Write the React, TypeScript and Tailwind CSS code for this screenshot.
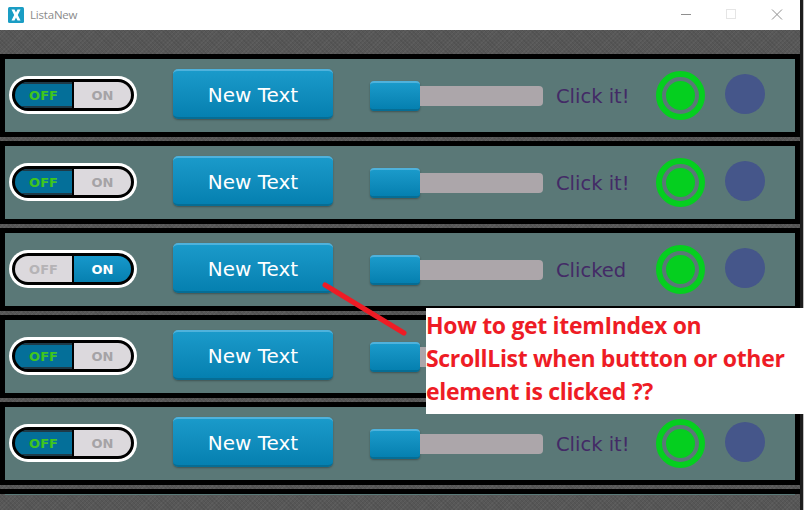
// Imports
import { useState } from 'react'

type RowProps = {
  on?: boolean
  label?: string
}

const texture =
  'bg-[#575757] bg-[repeating-linear-gradient(45deg,rgba(0,0,0,0.07)_0px,rgba(0,0,0,0.07)_1px,transparent_1px,transparent_3px),repeating-linear-gradient(-45deg,rgba(255,255,255,0.04)_0px,rgba(255,255,255,0.04)_1px,transparent_1px,transparent_3px)]'

function Toggle({ on }: { on: boolean }): JSX.Element {
  return (
    <div className="mb-px h-[38px] w-[128px] rounded-full bg-white p-[3px]">
      <div className="flex h-full w-full overflow-hidden rounded-full border-[3px] border-black bg-black">
        <div
          className={
            on
              ? 'flex w-[57px] items-center justify-center bg-[#dcd9dd] pt-px text-[13px] font-bold text-[#b5b3b6]'
              : 'flex w-[57px] items-center justify-center border-t-2 border-b-2 border-[#1f3a47] bg-[#046f99] pt-px text-[13px] font-bold text-[#3fc51e]'
          }
        >
          OFF
        </div>
        <div
          className={
            on
              ? 'ml-[2px] flex w-[57px] items-center justify-center bg-gradient-to-b from-[#1698cb] to-[#0680b0] pt-px text-[13px] font-bold text-white'
              : 'ml-[2px] flex w-[57px] items-center justify-center bg-[#dcd9dd] pt-px text-[13px] font-bold text-[#a5a3a6]'
          }
        >
          ON
        </div>
      </div>
    </div>
  )
}

function Row({ on = false, label = 'Click it!' }: RowProps): JSX.Element {
  const [isOn] = useState(on)

  return (
    <div className="mb-1 flex h-[83px] w-[800px] items-center border-[5px] border-black bg-[#5a7877] pl-1 font-['DejaVu_Sans',sans-serif]">
      <Toggle on={isOn} />

      <button className="mb-[3px] ml-9 h-[50px] w-40 rounded-[5px] border-t-2 border-b-2 border-t-[#4fb2dc] border-b-[#066d94] bg-gradient-to-b from-[#1a9aca] to-[#0580b0] pt-[2px] text-[20px] text-white shadow-[0_1px_2px_rgba(0,0,0,0.3)]">
        New Text
      </button>

      <div className="ml-[37px] flex items-center">
        <div className="h-[30px] w-[50px] rounded-[4px] border-t-2 border-b-2 border-t-[#4fb2dc] border-b-[#066d94] bg-gradient-to-b from-[#1a9aca] to-[#0580b0] shadow-[0_1px_2px_rgba(0,0,0,0.3)]" />
        <div className="h-5 w-[123px] rounded-r-[4px] bg-[#aca6aa]" />
      </div>

      <div className="h-[30px] w-[113px] pt-px pl-[13px] text-[19.5px] text-[#432a66]">{label}</div>

      <div className="mb-px flex h-[49px] w-[49px] items-center justify-center rounded-full border-[6px] border-[#05cf1f]">
        <div className="h-[29px] w-[29px] rounded-full bg-[#05cf1f]" />
      </div>

      <div className="mb-[3px] ml-5 h-10 w-10 rounded-full bg-[#45568a]" />
    </div>
  )
}

function App(): JSX.Element {
  return (
    <div className="relative flex h-[510px] w-[804px] overflow-hidden bg-white">
      <div className="w-[800px]">
        {/* Title bar */}
        <div className="flex h-[30px] items-center bg-white pl-2 font-['Open_Sans',sans-serif]">
          <svg width="16" height="16" viewBox="0 0 16 16">
            <rect width="16" height="16" rx="1.5" fill="#1a9dc4" />
            <path d="M3.500 2.500h3L8 5.500l1.500-3h3L9.800 8l2.700 5.500h-3L8 10.500l-1.500 3h-3L6.200 8z" fill="#ffffff" />
          </svg>
          <span className="ml-[6px] text-[11.5px] tracking-[-0.2px] text-[#8b8b8b]">ListaNew</span>
          <div className="ml-auto">
            <svg width="120" height="30" viewBox="0 0 120 30">
              <path d="M1 14.500h10" stroke="#8f8f8f" fill="none" />
              <rect x="46.500" y="9.500" width="9" height="9" stroke="#e5e5e5" fill="none" />
              <path d="M92 9.500l10 10M102 9.500l-10 10" stroke="#8f8f8f" fill="none" />
            </svg>
          </div>
        </div>

        {/* List */}
        <div className={`h-[480px] pt-6 ${texture}`}>
          <Row />
          <Row />
          <Row on label="Clicked" />
          <Row label="" />
          <Row />
          <div className="h-[6px] w-[800px] border-t-[5px] border-black">
            <div className="mx-[5px] h-px bg-[#5a7877]" />
          </div>
        </div>
      </div>

      {/* Window edge */}
      <div className="h-full w-[3px] bg-[#1c1c1c]" />
      <div className="h-full w-px bg-[#bdbdbd]" />

      {/* Annotation */}
      <svg className="absolute left-[320px] top-[280px]" width="90" height="60" viewBox="0 0 90 60">
        <path d="M5 5L84 53" stroke="#ee1c25" strokeWidth="5" strokeLinecap="round" />
      </svg>
      <div className="absolute left-[426px] top-[308px] h-[106px] w-[378px] bg-white pt-[1px] font-['Open_Sans',sans-serif] text-[23px] leading-[33px] font-bold tracking-[-0.33px] text-[#ee1c25]">
        How to get itemIndex on
        <br />
        ScrollList when buttton or other
        <br />
        element is clicked ??
      </div>
    </div>
  )
}

export default App
